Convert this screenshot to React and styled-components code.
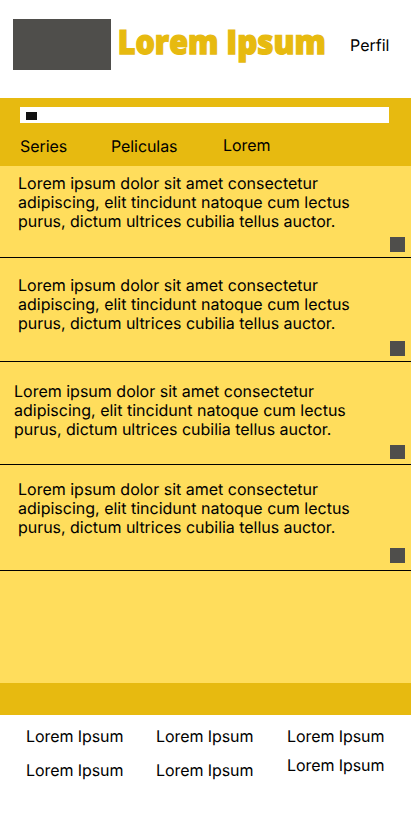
import React from 'react';
import styled, { createGlobalStyle } from 'styled-components';

const Global = createGlobalStyle`
  * { box-sizing: border-box; }
  body { margin: 0; background: #fff; color: #000; font: 400 16px/19px Inter, sans-serif; text-rendering: geometricPrecision; }
  p, h1 { margin: 0; }
`;
const Page = styled.div`width: 411px; height: 827px; overflow: hidden;`;
const Header = styled.header`height: 98px; display: flex; align-items: flex-start; padding: 19px 0 0 13px;`;
const Logo = styled.div`width: 98px; height: 51px; background: #4f4e4b; flex: none;`;
const Brand = styled.svg`width: 210px; height: 51px; margin-left: 7px; flex: none; overflow: visible;
  text { font: 800 33.5px "Open Sans", sans-serif; fill: #e7ba10; stroke: #e7ba10; stroke-width: 1.4px; }
`;
const Profile = styled.a`margin: 17px 0 0 22px;`;
const Toolbar = styled.nav`height: 68px; background: #e7ba10; padding: 9px 22px 0 20px;`;
const Search = styled.div`height: 16px; background: #fff; padding: 5px 6px 0;`;
const SearchIcon = styled.div`width: 11px; height: 8px; background: #111;`;
const Tabs = styled.div`display: grid; grid-template-columns: 91px 112px 1fr; padding-top: 14px; letter-spacing: -0.08px;`;
const Tab = styled.a`margin-top: ${p => p.$top || 0}px;`;
const List = styled.main`height: 517px; background: #ffdd5c;`;
const Row = styled.article`height: ${p => p.$height}px; border-bottom: 1px solid #000; display: flex; justify-content: space-between; padding: ${p => p.$top}px 6px 0 ${p => p.$left || 18}px;`;
const Copy = styled.p`white-space: pre;`;
const LastLine = styled.span`letter-spacing: -0.03px;`;
const Marker = styled.div`width: 15px; height: ${p => p.$size || 15}px; background: #4f4e4b; align-self: flex-end; margin-bottom: ${p => p.$bottom}px;`;
const Band = styled.div`height: 32px; background: #e7ba10;`;
const Footer = styled.footer`display: grid; grid-template-columns: 130px 131px 1fr; grid-template-rows: 34px 34px; padding: 12px 0 0 26px; letter-spacing: -0.08px;`;
const FooterLink = styled.a`margin-top: ${p => p.$top || 0}px;`;

const copy = 'Lorem ipsum dolor sit amet consectetur\nadipiscing, elit tincidunt natoque cum lectus\n';
const lastLine = 'purus, dictum ultrices cubilia tellus auctor.';
const rows = [
  { height: 92, top: 8, bottom: 5 },
  { height: 104, top: 18, bottom: 5 },
  { height: 103, top: 20, left: 14, bottom: 5, size: 14 },
  { height: 106, top: 15, bottom: 7 },
];

export default function App() {
  return (
    <Page>
      <Global />
      <Header>
        <Logo />
        <Brand role="heading" aria-label="Lorem Ipsum">
          <text x="-0.2" y="34.5" textLength="100.5" lengthAdjust="spacingAndGlyphs">Lorem</text>
          <text x="108.3" y="34.5" textLength="99.5" lengthAdjust="spacingAndGlyphs">Ipsum</text>
        </Brand>
        <Profile>Perfil</Profile>
      </Header>
      <Toolbar>
        <Search><SearchIcon /></Search>
        <Tabs><Tab>Series</Tab><Tab>Peliculas</Tab><Tab $top={-1}>Lorem</Tab></Tabs>
      </Toolbar>
      <List>
        {rows.map((r, i) => (
          <Row key={i} $height={r.height} $top={r.top} $left={r.left}>
            <Copy>{copy}<LastLine>{lastLine}</LastLine></Copy><Marker $bottom={r.bottom} $size={r.size} />
          </Row>
        ))}
      </List>
      <Band />
      <Footer>
        {[0, 0, 0, 0, 0, -5].map((top, i) => <FooterLink key={i} $top={top}>Lorem Ipsum</FooterLink>)}
      </Footer>
    </Page>
  );
}
